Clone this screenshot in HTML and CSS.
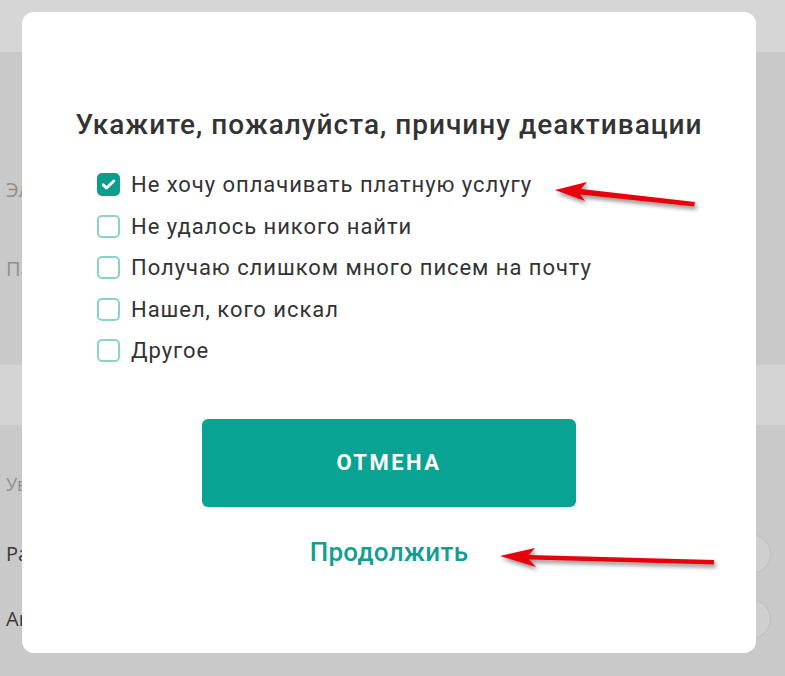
FILE: index.html
```html
<!DOCTYPE html>
<html lang="ru">
<head>
    <meta charset="UTF-8">
    <meta name="viewport" content="width=device-width, initial-scale=1.0">
    <title>Деактивация</title>
    <link rel="stylesheet" href="styles.css">
</head>
<body>
    <!-- page behind the overlay -->
    <div class="page">
        <div class="page-header"></div>
        <div class="page-section">
            <div class="page-label faded">Электронная почта</div>
            <div class="page-label faded">Пароль</div>
        </div>
        <div class="page-band"></div>
        <div class="page-section lower">
            <div class="page-label faded small">Уведомления</div>
            <div class="page-row"><span class="page-label">Рассылка</span><span class="toggle"></span></div>
            <div class="page-row"><span class="page-label">Акции</span><span class="toggle"></span></div>
        </div>
    </div>

    <div class="modal">
        <h2 class="modal-title">Укажите, пожалуйста, причину деактивации</h2>

        <ul class="reasons">
            <li class="reason">
                <span class="check checked">
                    <svg viewBox="0 0 24 24" width="17" height="17"><path d="M4.5 12.5l4.8 4.6L19.5 7" fill="none" stroke="#fff" stroke-width="4" stroke-linecap="round" stroke-linejoin="round"/></svg>
                </span>
                <span>Не хочу оплачивать платную услугу</span>
            </li>
            <li class="reason"><span class="check"></span><span>Не удалось никого найти</span></li>
            <li class="reason"><span class="check"></span><span>Получаю слишком много писем на почту</span></li>
            <li class="reason"><span class="check"></span><span>Нашел, кого искал</span></li>
            <li class="reason"><span class="check"></span><span>Другое</span></li>
        </ul>

        <button class="btn-cancel">ОТМЕНА</button>
        <a class="link-continue" href="#">Продолжить</a>
    </div>

    <!-- annotation arrows drawn over the screenshot -->
    <svg class="arrows" viewBox="0 0 785 676" width="785" height="676">
        <defs>
            <filter id="shadow" x="-10%" y="-50%" width="120%" height="200%">
                <feDropShadow dx="2" dy="3" stdDeviation="2" flood-color="#000" flood-opacity="0.45"/>
            </filter>
        </defs>
        <g fill="#e8000a" filter="url(#shadow)">
            <path d="M555 190 L587 182 L581 189 L695 202 L694 206.5 L580 194.5 L585 201 Z"/>
            <path d="M500 556 L535 548 L529 555 L714 560 L714 564.5 L529 559.5 L536 567 Z"/>
        </g>
    </svg>
</body>
</html>
```

FILE: styles.css
```css
* {
    margin: 0;
    padding: 0;
    box-sizing: border-box;
}

body {
    font-family: Roboto, 'Noto Sans', sans-serif;
    background: #c9c9c9;
    width: 785px;
    height: 676px;
    overflow: hidden;
    position: relative;
}

/* background page (dimmed) */
.page {
    color: #8c8c8c;
    font-family: 'Open Sans', sans-serif;
}

.page-header {
    height: 52px;
    background: #d6d6d6;
}

.page-section {
    height: 313px;
    padding: 126px 0 0 6px;
    display: flex;
    flex-direction: column;
    gap: 55px;
}

.page-section.lower {
    height: 251px;
    padding-top: 47px;
    gap: 0;
}

.page-band {
    height: 60px;
    background: #d4d4d4;
}

.page-label {
    font-size: 20px;
    line-height: 24px;
    color: #3a3a3a;
}

.page-label.faded {
    color: #8e8e8e;
}

.page-label.small {
    font-size: 18px;
    margin-bottom: 25px;
}

.page-row {
    display: flex;
    justify-content: space-between;
    align-items: center;
    height: 65px;
}

.toggle {
    width: 40px;
    height: 40px;
    border-radius: 50%;
    border: 1px solid #bdbdbd;
    background: #cfcfcf;
    margin-right: 14px;
}

/* modal */
.modal {
    position: absolute;
    top: 12px;
    left: 22px;
    width: 734px;
    height: 641px;
    background: #fff;
    border-radius: 12px;
    padding: 97px 0 0;
    display: flex;
    flex-direction: column;
    align-items: center;
}

.modal-title {
    font-size: 28px;
    font-weight: 500;
    line-height: 32px;
    letter-spacing: 1px;
    color: #333;
    text-align: center;
}

.reasons {
    list-style: none;
    align-self: stretch;
    padding-left: 75px;
    margin-top: 23px;
}

.reason {
    display: flex;
    align-items: center;
    height: 41.5px;
    font-size: 22px;
    letter-spacing: 0.95px;
    color: #333;
}

.check {
    width: 23px;
    height: 23px;
    border: 2px solid #8ad3ca;
    border-radius: 5px;
    margin-right: 11px;
    display: flex;
    align-items: center;
    justify-content: center;
    flex-shrink: 0;
}

.check.checked {
    background: #0a9e8f;
    border-color: #0a9e8f;
}

.btn-cancel {
    margin-top: 47px;
    width: 374px;
    height: 88px;
    border: none;
    border-radius: 6px;
    background: #08a393;
    color: #fff;
    font-family: Roboto, sans-serif;
    font-size: 22px;
    font-weight: 700;
    letter-spacing: 2.5px;
}

.link-continue {
    margin-top: 29px;
    font-size: 26px;
    font-weight: 500;
    line-height: 32px;
    letter-spacing: 0.3px;
    color: #109f90;
    text-decoration: none;
}

.arrows {
    position: absolute;
    top: 0;
    left: 0;
    pointer-events: none;
}
```
